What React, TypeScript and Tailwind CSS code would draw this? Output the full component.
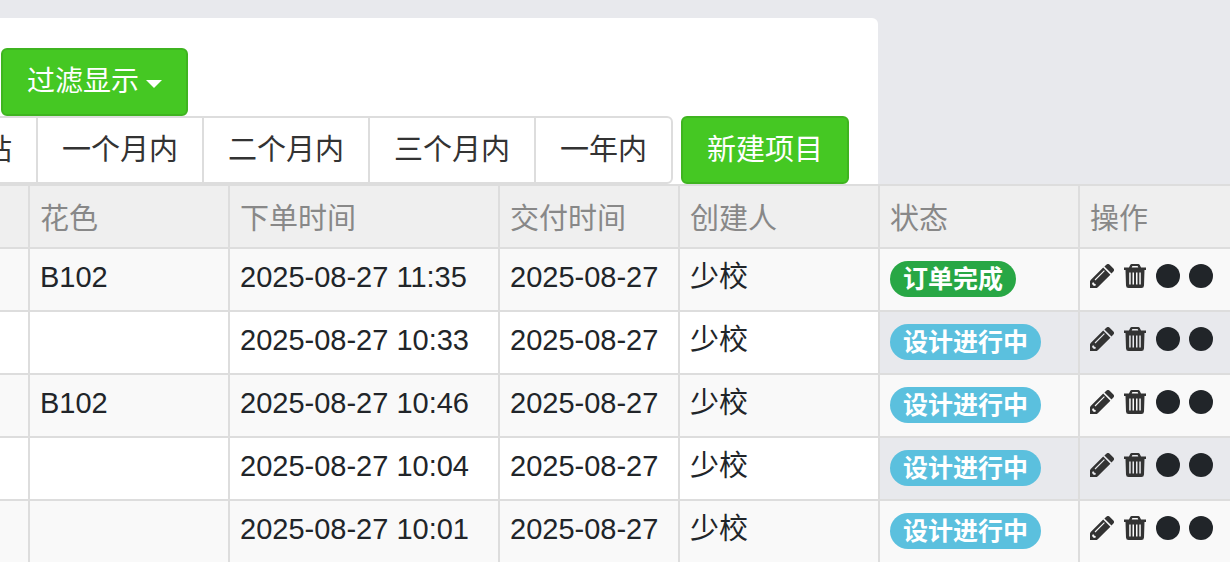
type Status = "done" | "designing";

interface Order {
  color: string;
  ordered: string;
  delivery: string;
  creator: string;
  status: Status;
}

const orders: Order[] = [
  { color: "B102", ordered: "2025-08-27 11:35", delivery: "2025-08-27", creator: "少校", status: "done" },
  { color: "", ordered: "2025-08-27 10:33", delivery: "2025-08-27", creator: "少校", status: "designing" },
  { color: "B102", ordered: "2025-08-27 10:46", delivery: "2025-08-27", creator: "少校", status: "designing" },
  { color: "", ordered: "2025-08-27 10:04", delivery: "2025-08-27", creator: "少校", status: "designing" },
  { color: "", ordered: "2025-08-27 10:01", delivery: "2025-08-27", creator: "少校", status: "designing" },
];

const ranges = ["站", "一个月内", "二个月内", "三个月内", "一年内"];

function CaretIcon() {
  return (
    <svg viewBox="0 0 16 8" className="mt-1 h-2 w-4" fill="currentColor" aria-hidden="true">
      <path d="M0 0h16L8 8z" />
    </svg>
  );
}

function PencilIcon() {
  return (
    <svg viewBox="0 0 24 24" className="size-6" fill="#333" aria-hidden="true">
      <path d="M16.600 .600a2 2 0 0 1 2.800 0l4 4a2 2 0 0 1 0 2.800L21.500 9.600 14.400 2.500z" />
      <path
        fillRule="evenodd"
        d="M13.200 3.600l7.200 7.200L7.800 23.300 6.800 24H0v-6.800l.7-1.100zM14 6.200L4.600 15.600l.8.800L14.800 7zM2.600 18.400l-.6 1.700 1.900 1.900 1.900-.6-.2-1.400-1.300-.2-.3-1.400z"
      />
    </svg>
  );
}

function TrashIcon() {
  return (
    <svg viewBox="0 0 24 24" className="size-6" fill="#333" aria-hidden="true">
      <path
        fillRule="evenodd"
        d="M6 3.500l1.200-2.500q.5-1 1.600-1h6.400q1.100 0 1.600 1L18 3.500h5V6H1V3.500zM8.700 3.500h6.600L14.600 2H9.400z"
      />
      <path
        fillRule="evenodd"
        d="M2.500 6h19L21 21.500q-.1 2.500-2.600 2.500H5.600Q3.100 24 3 21.500zM6.200 8.500V20.500h1.500V8.500zM9.500 8.500V20.500H11V8.500zM13 8.500V20.500h1.500V8.500zM16.300 8.500V20.500h1.500V8.500z"
      />
    </svg>
  );
}

function DotIcon() {
  return (
    <svg viewBox="0 0 24 24" className="size-6" fill="#212529" aria-hidden="true">
      <circle cx="12" cy="12" r="12" />
    </svg>
  );
}

function StatusBadge({ status }: { status: Status }) {
  return (
    <span
      className={
        "inline-block rounded-full px-[13px] text-[25px] leading-9 font-bold text-white " +
        (status === "done" ? "bg-[#28a745]" : "bg-[#5bc0de]")
      }
    >
      {status === "done" ? "订单完成" : "设计进行中"}
    </span>
  );
}

function Heading({ children }: { children?: string }) {
  return (
    <th scope="col" className="h-[63px] border-2 border-[#ddd] px-[10px] pt-1 text-left font-normal">
      {children}
    </th>
  );
}

const cell = "h-[63px] border-2 border-[#ddd] px-[10px] pb-[6px]";

export default function App() {
  return (
    <div
      lang="zh-CN"
      className="min-h-screen overflow-hidden bg-[#e8e9ed] pt-[18px] font-['Liberation_Sans','Noto_Sans_CJK_SC',sans-serif] text-[29px] leading-10 text-[#212529]"
    >
      <main className="mr-[352px] rounded-tr-md bg-white pt-[30px]">
        <div className="pl-px">
          <button
            type="button"
            className="flex h-[68px] items-center gap-[7px] rounded-md border-2 border-[#3fb420] bg-[#45c823] px-6 text-[28px] text-white"
          >
            过滤显示
            <CaretIcon />
          </button>
        </div>
        <div className="flex items-center gap-2">
          <div role="group" aria-label="时间范围" className="-ml-[43px] flex">
            {ranges.map((range) => (
              <button
                key={range}
                type="button"
                className="-mr-0.5 h-[68px] shrink-0 border-2 border-[#ddd] bg-white px-6 whitespace-nowrap text-[#333] last:mr-0 last:rounded-r-md"
              >
                {range}
              </button>
            ))}
          </div>
          <button
            type="button"
            className="h-[68px] shrink-0 rounded-md border-2 border-[#3fb420] bg-[#45c823] px-6 whitespace-nowrap text-white"
          >
            新建项目
          </button>
        </div>
        <table className="-ml-[172px] w-[1450px] table-fixed border-collapse whitespace-nowrap">
          <colgroup>
            <col className="w-[200px]" />
            <col className="w-[200px]" />
            <col className="w-[270px]" />
            <col className="w-[180px]" />
            <col className="w-[200px]" />
            <col className="w-[200px]" />
            <col className="w-[200px]" />
          </colgroup>
          <thead className="bg-[#efefef] text-[#888]">
            <tr>
              <Heading />
              <Heading>花色</Heading>
              <Heading>下单时间</Heading>
              <Heading>交付时间</Heading>
              <Heading>创建人</Heading>
              <Heading>状态</Heading>
              <Heading>操作</Heading>
            </tr>
          </thead>
          <tbody>
            {orders.map((order) => (
              <tr key={order.ordered} className="odd:bg-[#f9f9f9]">
                <td className={cell} />
                <td className={cell}>{order.color}</td>
                <td className={cell}>{order.ordered}</td>
                <td className={cell}>{order.delivery}</td>
                <td className={cell}>{order.creator}</td>
                <td className="h-[63px] border-2 border-[#ddd] px-[10px] pb-[2px]">
                  <div className="flex">
                    <StatusBadge status={order.status} />
                  </div>
                </td>
                <td className="h-[63px] border-2 border-[#ddd] px-[10px] pb-2">
                  <div className="flex gap-[9px]">
                    <button type="button" aria-label="编辑"><PencilIcon /></button>
                    <button type="button" aria-label="删除"><TrashIcon /></button>
                    <DotIcon />
                    <DotIcon />
                  </div>
                </td>
              </tr>
            ))}
          </tbody>
        </table>
      </main>
    </div>
  );
}
